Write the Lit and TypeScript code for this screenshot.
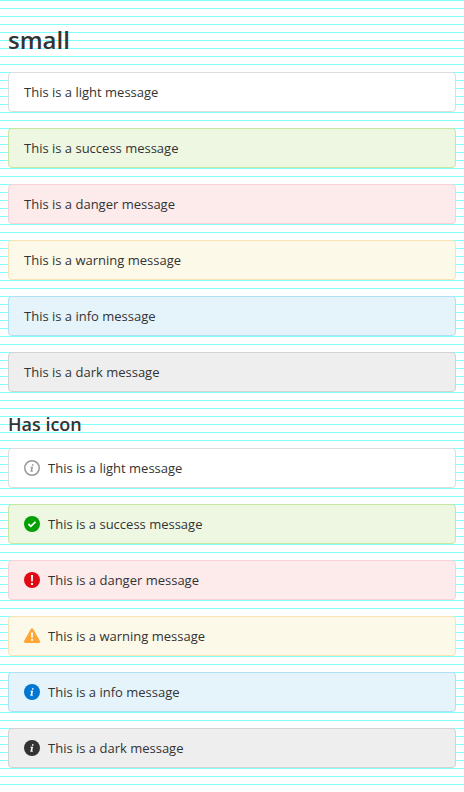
import { LitElement, html, css, svg } from "lit";
import { customElement, property } from "lit/decorators.js";

const kinds = ["light", "success", "danger", "warning", "info", "dark"];

const letterI = (fill: string) => svg`<path fill=${fill}
  d="M8.1 4.2h1.5l-.3 1.5H7.8zM6.6 6.7h2.5l-.9 4h.8l-.3 1H6.3l1-4h-.9z"/>`;

const icons: Record<string, unknown> = {
  light: svg`<circle cx="8" cy="8" r="7.25" fill="none" stroke="#999" stroke-width="1.5"/>${letterI("#999")}`,
  success: svg`<circle cx="8" cy="8" r="8" fill="#00a000"/>
    <path d="M4.4 8l2.4 2.3 4.7-4.5" fill="none" stroke="#fff" stroke-width="1.8"/>`,
  danger: svg`<circle cx="8" cy="8" r="8" fill="#e00a14"/>
    <path fill="#fff" d="M7 3h2l-.2 6.6H7.2zM7 11h2v1.9H7z"/>`,
  warning: svg`<path fill="#ffa633" stroke="#ffa633" stroke-width="3" stroke-linejoin="round" d="M8 1.9l6.5 11.7h-13z"/>
    <path fill="#fff" d="M7 4.5h2l-.2 5.2H7.2zM7 11h2v1.8H7z"/>`,
  info: svg`<circle cx="8" cy="8" r="8" fill="#0078d2"/>${letterI("#fff")}`,
  dark: svg`<circle cx="8" cy="8" r="8" fill="#333"/>${letterI("#fff")}`,
};

@customElement("ui-message")
class UiMessage extends LitElement {
  @property() kind = "light";
  @property({ type: Boolean }) icon = false;

  static styles = css`
    :host { display: block; }
    .message {
      box-sizing: border-box;
      height: 40px;
      padding: 0 15px;
      display: flex;
      align-items: center;
      gap: 8px;
      border: 1px solid #ddd;
      border-radius: 4px;
      font-size: 13px;
      line-height: 16px;
    }
    svg { width: 16px; height: 16px; flex: none; display: block; overflow: hidden; }
    .light { background: #fff; border-color: #ddd; }
    .success { background: #eef7e2; border-color: #c8e6a0; }
    .danger { background: #fdeaea; border-color: #fad1d3; }
    .warning { background: #fdf9e8; border-color: #fae2b4; }
    .info { background: #e5f3fb; border-color: #b0dff5; }
    .dark { background: #eee; border-color: #d2d2d2; }
  `;

  render() {
    return html`<div class="message ${this.kind}">
      ${this.icon ? html`<svg viewBox="0 0 16 16">${icons[this.kind]}</svg>` : null}
      <span>This is a ${this.kind} message</span>
    </div>`;
  }
}

@customElement("app-root")
class AppRoot extends LitElement {
  static styles = css`
    :host {
      display: block;
      box-sizing: border-box;
      height: 792px;
      padding: 24px 8px;
      color: #333;
      font-family: "Open Sans", sans-serif;
      background: #fff repeating-linear-gradient(to bottom, #80ffff 0 1px, #fff 1px 8px);
    }
    h1, h2 { margin: 0; font-weight: 600; }
    h1 { font-size: 24px; line-height: 32px; margin-bottom: 16px; }
    h2 { font-size: 18px; line-height: 24px; margin: 20px 0 12px; }
    .list { display: grid; gap: 16px; }
  `;

  render() {
    return html`
      <h1>small</h1>
      <div class="list">${kinds.map((k) => html`<ui-message kind=${k}></ui-message>`)}</div>
      <h2>Has icon</h2>
      <div class="list">${kinds.map((k) => html`<ui-message kind=${k} icon></ui-message>`)}</div>
    `;
  }
}
